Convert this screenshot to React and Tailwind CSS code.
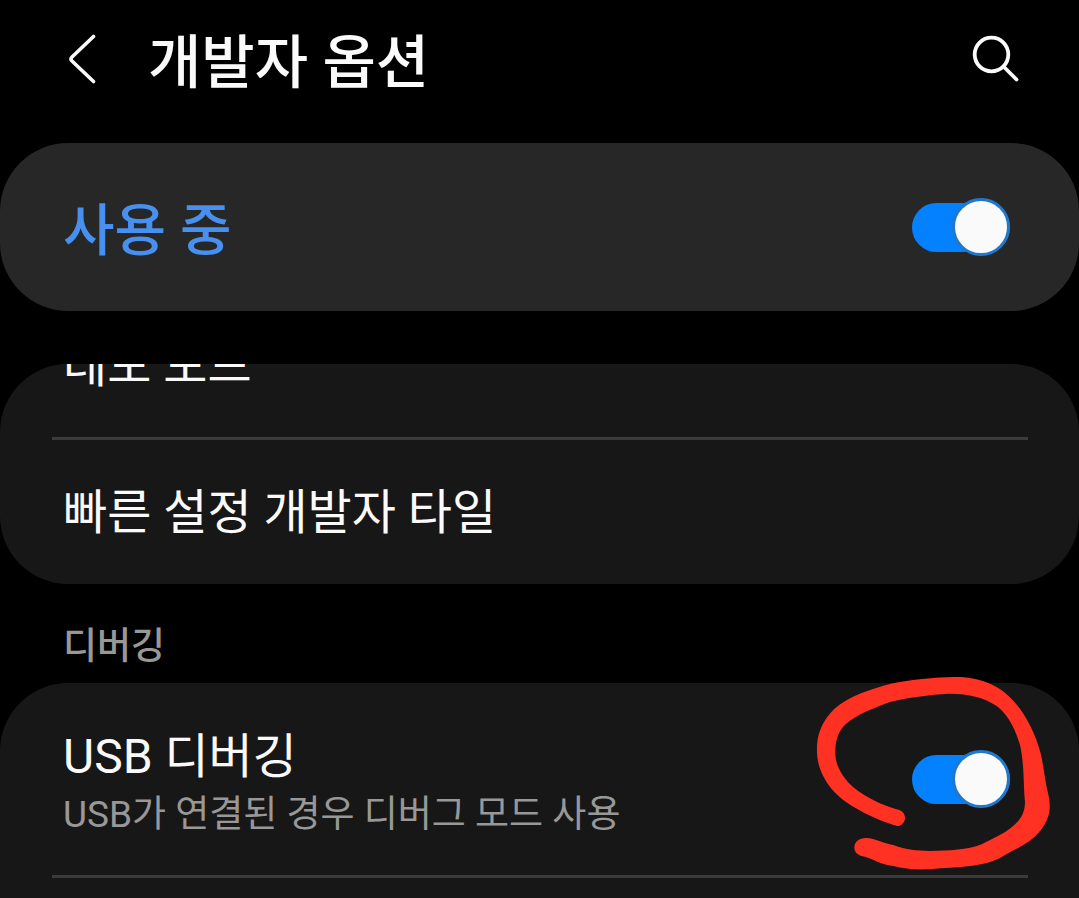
import React, { useState } from 'react';

const Toggle = ({ id, label, checked, onChange }) => (
  <input
    id={id}
    type="checkbox"
    role="switch"
    aria-label={label}
    checked={checked}
    onChange={(e) => onChange(e.target.checked)}
    className="appearance-none flex items-center shrink-0 w-[98px] h-[49px] rounded-full cursor-pointer bg-[#5a5a5a] checked:bg-[#0381fe] after:content-[''] after:block after:shrink-0 after:size-[58px] after:rounded-full after:bg-[#fafafa] after:border-3 after:border-[#5a5a5a] checked:after:border-[#2078ce] checked:after:ml-auto"
  />
);

const Divider = () => <div className="ml-[52px] mr-[51px] h-[3px] bg-[#3b3b3b]"></div>;

// hand-drawn marker around the USB debugging switch
const Marker = () => (
  <svg
    className="absolute -top-[7px] right-[28px] w-[235px] h-[195px] pointer-events-none"
    viewBox="78 48 705 585"
    aria-hidden="true"
  >
    <path
      fill="#ff3122"
      d="M322 498C290 490 230 465 190 440C140 410 115 380 98 345C82 312 80 285 81 255C84 210 105 175 132 148C175 108 250 85 300 72C350 60 440 51 490 51C570 50 620 75 655 107C700 148 735 215 752 280C762 325 766 370 776 408C784 445 778 475 755 507C720 550 690 560 645 585C600 615 540 620 450 625C390 632 350 628 310 618C270 612 250 598 225 590C205 588 192 578 193 560C195 545 208 533 230 534C255 535 280 550 310 555C350 570 380 572 420 573C480 572 530 570 575 553C610 535 640 522 665 502C690 482 705 460 705 425C700 380 703 310 690 255C675 205 655 165 620 138C580 110 530 101 475 101C420 104 350 113 300 126C250 145 200 163 165 194C140 220 135 250 136 285C138 320 160 355 190 382C230 415 280 437 325 449C340 453 346 465 345 477C342 490 333 498 322 498Z"
    />
  </svg>
);

const App = () => {
  const [enabled, setEnabled] = useState(true);
  const [usbDebugging, setUsbDebugging] = useState(true);

  return (
    <div className="flex flex-col h-screen overflow-hidden bg-black text-[#fafafa] font-['Roboto','Noto_Sans_CJK_KR',sans-serif]" lang="ko">
      <header className="flex items-center h-[118px] mb-[25px] pl-[68px] pr-[60px] shrink-0">
        <button type="button" aria-label="뒤로" className="mr-[52px]">
          <svg className="w-7 h-[50px]" viewBox="0 0 28 50" fill="none" stroke="currentColor" strokeWidth="3.6" strokeLinecap="round" strokeLinejoin="round">
            <path d="M25.5 2.5L4 23Q2 25 4 27L25.5 47.5" />
          </svg>
        </button>
        <h1 className="flex-1 pt-2 text-[58px] leading-[64px] font-medium">개발자 옵션</h1>
        <button type="button" aria-label="검색">
          <svg className="size-12" viewBox="0 0 48 48" fill="none" stroke="currentColor" strokeWidth="3.8" strokeLinecap="round">
            <circle cx="20.5" cy="19.5" r="16.8" />
            <path d="M33 32L45.5 44.5" />
          </svg>
        </button>
      </header>

      <section className="flex items-center justify-between h-[168px] mb-[53px] pl-[63px] pr-[69px] shrink-0 rounded-[68px] bg-[#272727]">
        <label htmlFor="enabled" className="pt-2 text-[56px] leading-[64px] font-medium text-[#4790f0]">사용 중</label>
        <Toggle id="enabled" label="사용 중" checked={enabled} onChange={setEnabled} />
      </section>

      {/* list is scrolled, so the first row starts above the card */}
      <section className="h-[220px] shrink-0 overflow-hidden rounded-[68px] bg-[#171717]">
        <ul className="-mt-[71px] text-5xl leading-[56px]">
          <li className="flex items-center h-36 pt-0.5 px-[63px]">데모 모드</li>
          <li><Divider /></li>
          <li className="flex items-center h-36 pt-0.5 px-[63px]">빠른 설정 개발자 타일</li>
        </ul>
      </section>

      <h2 className="flex items-end h-[99px] px-[63px] pb-3.5 shrink-0 text-[37px] leading-[44px] font-medium text-[#989898]">디버깅</h2>

      <section className="relative flex-1 rounded-t-[68px] bg-[#171717]">
        <div className="flex items-center justify-between h-48 pl-[63px] pr-[69px]">
          <label htmlFor="usb" className="flex flex-col pt-3">
            <span className="text-5xl leading-[60px]">USB 디버깅</span>
            <span className="text-[37px] leading-[56px] text-[#989898]">USB가 연결된 경우 디버그 모드 사용</span>
          </label>
          <Toggle id="usb" label="USB 디버깅" checked={usbDebugging} onChange={setUsbDebugging} />
        </div>
        <Divider />
        <Marker />
      </section>
    </div>
  );
};

export default App;
